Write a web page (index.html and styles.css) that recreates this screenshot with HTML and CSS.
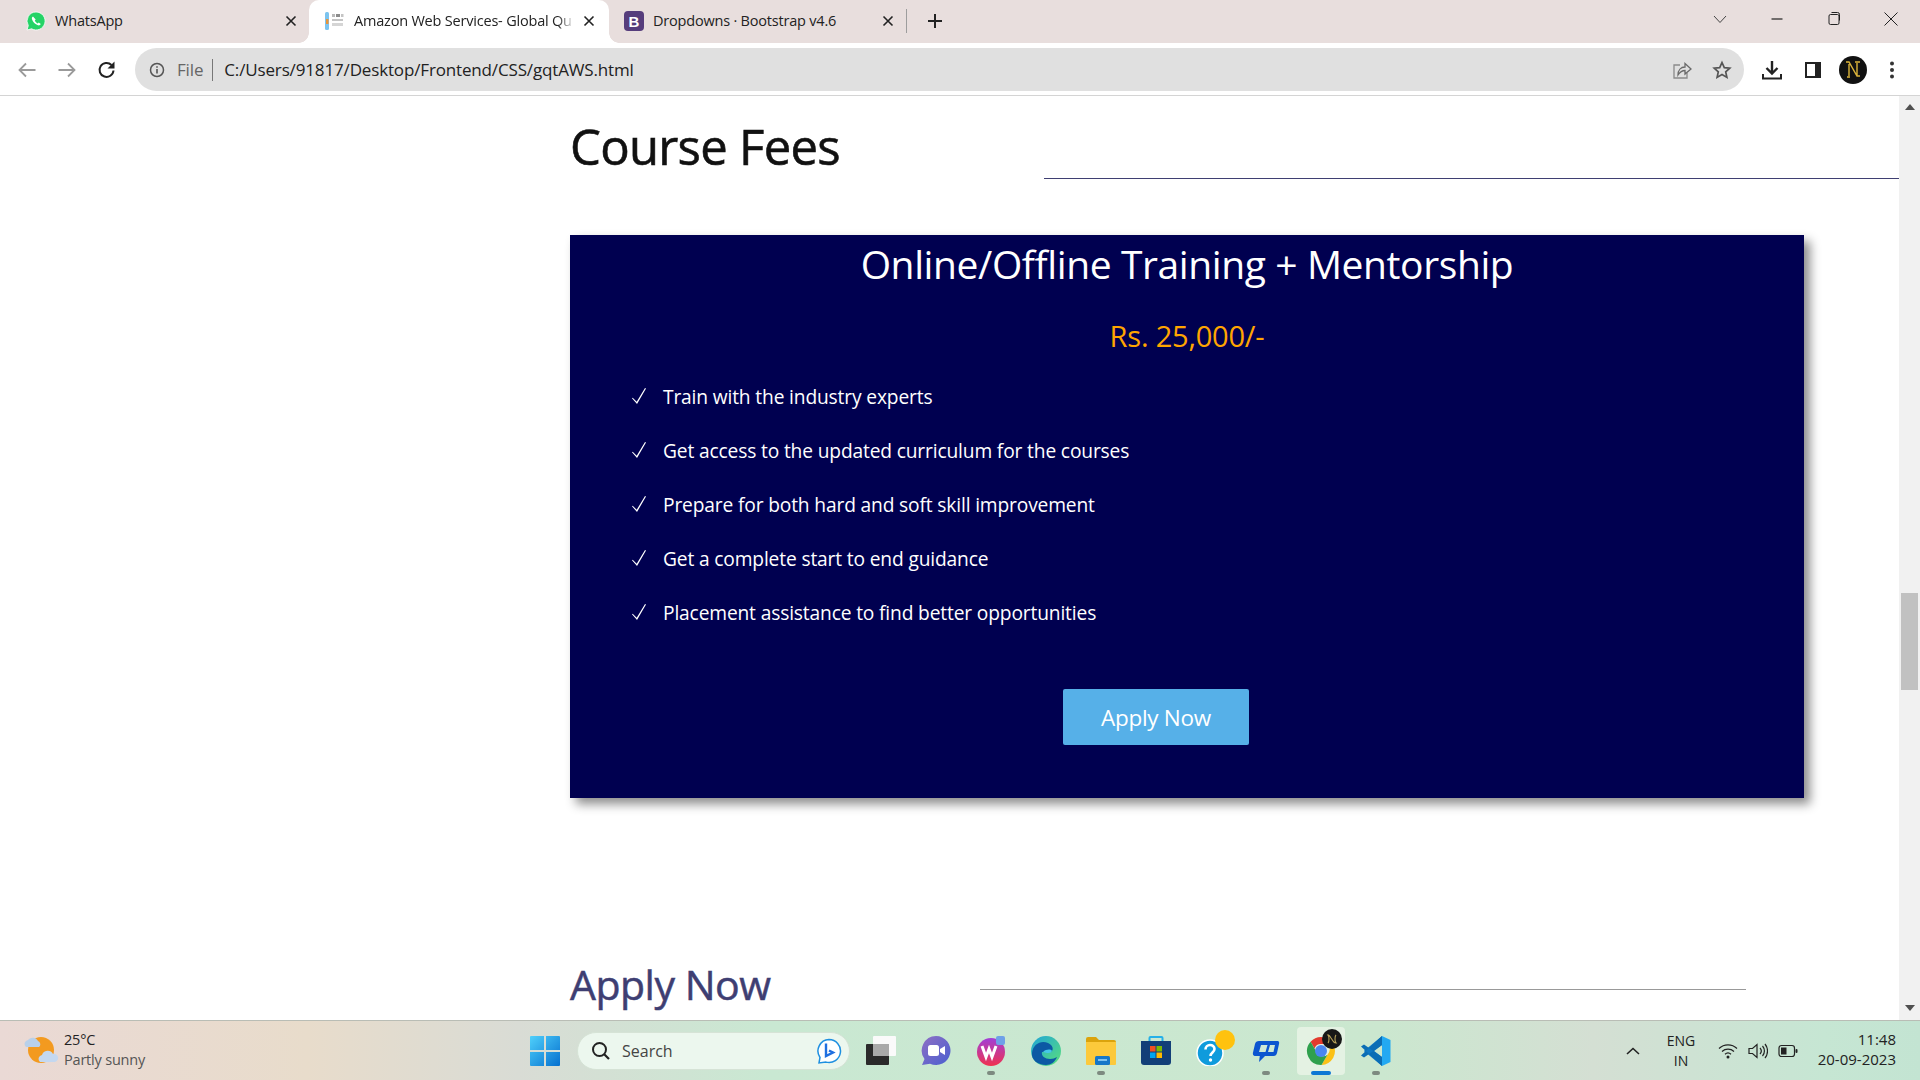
FILE: index.html
```html
<!DOCTYPE html>
<html lang="en">
<head>
<meta charset="utf-8">
<title>Amazon Web Services- Global Quest</title>
<link rel="stylesheet" href="styles.css">
</head>
<body>
<div class="screen">

  <header class="tabstrip">
    <div class="tab tab-first">
      <svg class="favicon" viewBox="0 0 20 20"><path d="M10 1a9 9 0 0 0-7.700 13.600L1 19l4.600-1.200A9 9 0 1 0 10 1z" fill="#25d366" stroke="#fff" stroke-width=".8"/><path d="M7 5.500c-.9.500-1.400 1.500-1 2.800.8 2.600 3.200 5.200 6 6 1.300.3 2.300-.2 2.800-1.200l-2.100-1.500-1 .9c-1.200-.5-2.300-1.600-2.900-3l.9-1z" fill="#fff"/></svg>
      <span class="tab-label">WhatsApp</span>
      <svg class="tab-close" viewBox="0 0 12 12"><path d="M1.500 1.500l9 9M10.500 1.500l-9 9" stroke="#222" stroke-width="1.600"/></svg>
    </div>
    <div class="tab tab-active">
      <svg class="favicon" viewBox="0 0 20 20"><rect x="1" y="1" width="4" height="18" rx="1.500" fill="#7cc3ee"/><rect x="2" y="8" width="2.500" height="5" fill="#e8943a"/><rect x="8" y="3" width="3" height="3" fill="#b9b9b9"/><rect x="12" y="3" width="4" height="3" fill="#8c8c8c"/><rect x="17" y="3" width="2.500" height="3" fill="#c4c4c4"/><rect x="8" y="8" width="11" height="2" fill="#c4c4c4"/><rect x="8" y="12" width="11" height="3" fill="#d5d5d5"/></svg>
      <span class="tab-label tab-fade">Amazon Web Services- Global Qu</span>
      <svg class="tab-close" viewBox="0 0 12 12"><path d="M1.500 1.500l9 9M10.500 1.500l-9 9" stroke="#222" stroke-width="1.600"/></svg>
    </div>
    <div class="tab tab-third">
      <svg class="favicon" viewBox="0 0 20 20"><rect width="20" height="20" rx="4" fill="#563d7c"/><text x="10" y="15.500" class="favicon-b">B</text></svg>
      <span class="tab-label">Dropdowns · Bootstrap v4.6</span>
      <svg class="tab-close" viewBox="0 0 12 12"><path d="M1.500 1.500l9 9M10.500 1.500l-9 9" stroke="#222" stroke-width="1.600"/></svg>
    </div>
    <span class="tab-sep"></span>
    <svg class="tab-plus" viewBox="0 0 16 16"><path d="M8 1v14M1 8h14" stroke="#222" stroke-width="2"/></svg>
    <div class="window-controls">
      <svg class="win-btn" viewBox="0 0 16 16"><path d="M2 5l6 6.500L14 5" fill="none" stroke="#444"/></svg>
      <svg class="win-btn" viewBox="0 0 16 16"><path d="M2.500 8h11" stroke="#222" stroke-width="1.200"/></svg>
      <svg class="win-btn" viewBox="0 0 16 16"><rect x="3" y="3.500" width="10" height="10" rx="1.500" fill="none" stroke="#222"/><path d="M5.500 1.500h6a2 2 0 0 1 2 2v6" fill="none" stroke="#222"/></svg>
      <svg class="win-btn" viewBox="0 0 16 16"><path d="M1.500 1.500l13 13M14.500 1.500l-13 13" stroke="#222"/></svg>
    </div>
  </header>

  <nav class="toolbar">
    <svg class="nav-icon" viewBox="0 0 20 20"><path d="M18.500 10H2.500M9 3.500L2.500 10 9 16.500" fill="none" stroke="#9a9a9a" stroke-width="1.800"/></svg>
    <svg class="nav-icon" viewBox="0 0 20 20"><path d="M1.500 10h16M11 3.500l6.500 6.500-6.500 6.500" fill="none" stroke="#9a9a9a" stroke-width="1.800"/></svg>
    <svg class="nav-icon" viewBox="0 0 20 20"><path d="M16.500 10.500a7 7 0 1 1-2-5.500" fill="none" stroke="#222" stroke-width="2"/><path d="M17.500 1.500v7h-7z" fill="#222"/></svg>
    <div class="omnibox">
      <svg class="info-icon" viewBox="0 0 16 16"><circle cx="8" cy="8" r="6.500" fill="none" stroke="#555" stroke-width="1.500"/><path d="M8 7v4.500M8 4.200v1.500" stroke="#555" stroke-width="1.600"/></svg>
      <span class="scheme">File</span>
      <span class="url">C:/Users/91817/Desktop/Frontend/CSS/gqtAWS.html</span>
      <svg class="omni-action" viewBox="0 0 20 20"><path d="M8 5H2v13h13v-5" fill="none" stroke="#8a8a8a" stroke-width="1.300"/><path d="M6 15c0-5 3-8 7-8V3.500l6 5.500-6 5v-3.500c-3 0-5 1.500-7 4.500z" fill="none" stroke="#6a6a6a" stroke-width="1.300"/></svg>
      <svg class="omni-action" viewBox="0 0 20 20"><path d="M10 2.500l2.300 5.100 5.500.6-4.100 3.700 1.200 5.500-4.900-2.800-4.900 2.800 1.200-5.500-4.100-3.700 5.500-.6z" fill="none" stroke="#555" stroke-width="1.700"/></svg>
    </div>
    <svg class="tool-icon" viewBox="0 0 20 20"><path d="M10 1v12M4.500 8l5.500 5.500L15.500 8" fill="none" stroke="#222" stroke-width="2.400"/><path d="M1 14v4.500h18V14" fill="none" stroke="#222" stroke-width="2"/></svg>
    <svg class="tool-icon" viewBox="0 0 20 20"><rect x="2" y="2" width="16" height="16" fill="#222"/><rect x="4" y="4" width="8" height="12" fill="#fff"/></svg>
    <svg class="avatar" viewBox="0 0 28 28"><circle cx="14" cy="14" r="14" fill="#111"/><path d="M7 6h3l8 14h3M10 6v0M18 20V7M8 21h3M10 8v12M16 6h5" fill="none" stroke="#dcb43a" stroke-width="1.400"/></svg>
    <svg class="kebab" viewBox="0 0 6 20"><circle cx="3" cy="3.500" r="2" fill="#333"/><circle cx="3" cy="10" r="2" fill="#333"/><circle cx="3" cy="16.500" r="2" fill="#333"/></svg>
  </nav>

  <div class="viewport">
    <main class="page">
      <section class="fees">
        <div class="section-head">
          <h1 class="fees-title">Course Fees</h1>
          <span class="fees-rule"></span>
        </div>
        <article class="plan">
          <h2 class="plan-title">Online/Offline Training + Mentorship</h2>
          <p class="plan-price">Rs. 25,000/-</p>
          <ul class="plan-list">
            <li class="plan-item"><svg class="tick" viewBox="0 0 14 16"><path d="M0 10.300l.7-.6 4 4.100L13 0l1 .5L5 16z" fill="#fff"/></svg>Train with the industry experts</li>
            <li class="plan-item"><svg class="tick" viewBox="0 0 14 16"><path d="M0 10.300l.7-.6 4 4.100L13 0l1 .5L5 16z" fill="#fff"/></svg>Get access to the updated curriculum for the courses</li>
            <li class="plan-item"><svg class="tick" viewBox="0 0 14 16"><path d="M0 10.300l.7-.6 4 4.100L13 0l1 .5L5 16z" fill="#fff"/></svg>Prepare for both hard and soft skill improvement</li>
            <li class="plan-item"><svg class="tick" viewBox="0 0 14 16"><path d="M0 10.300l.7-.6 4 4.100L13 0l1 .5L5 16z" fill="#fff"/></svg>Get a complete start to end guidance</li>
            <li class="plan-item"><svg class="tick" viewBox="0 0 14 16"><path d="M0 10.300l.7-.6 4 4.100L13 0l1 .5L5 16z" fill="#fff"/></svg>Placement assistance to find better opportunities</li>
          </ul>
          <div class="plan-cta"><a class="apply-btn">Apply Now</a></div>
        </article>
      </section>
      <section class="apply">
        <h2 class="apply-title">Apply Now</h2>
        <span class="apply-rule"></span>
      </section>
    </main>
    <aside class="scrollbar">
      <span class="arrow-up"></span>
      <span class="thumb"></span>
      <span class="arrow-down"></span>
    </aside>
  </div>

  <footer class="taskbar">
    <div class="weather">
      <svg class="weather-icon" viewBox="0 0 36 32"><circle cx="18" cy="16" r="13" fill="#f39a1f"/><path d="M18 3a13 13 0 0 1 0 26 10 10 0 0 0 0-26z" fill="#e8701a"/><path d="M3 13a4 4 0 0 1 2-7 6 6 0 0 1 10 1 3.500 3.500 0 0 1 1 6z" fill="#b8d0ea"/><path d="M17 28a4 4 0 0 1 2-7 6 6 0 0 1 11-1 4 4 0 0 1 2 8z" fill="#c4d8f0"/></svg>
      <div class="weather-text">
        <span class="weather-temp">25°C</span>
        <span class="weather-desc">Partly sunny</span>
      </div>
    </div>
    <div class="task-center">
      <div class="task-slot">
        <svg class="task-icon" viewBox="0 0 30 30"><defs><linearGradient id="winG" x1="0" y1="0" x2="1" y2="1"><stop offset="0" stop-color="#4fd0fb"/><stop offset="1" stop-color="#0570cf"/></linearGradient></defs><path d="M0 1a1 1 0 0 1 1-1h13v14H0zM16 0h13a1 1 0 0 1 1 1v13H16zM0 16h14v14H1a1 1 0 0 1-1-1zM16 16h14v13a1 1 0 0 1-1 1H16z" fill="url(#winG)"/></svg>
      </div>
      <div class="searchbox">
        <svg class="search-glass" viewBox="0 0 20 20"><circle cx="8.500" cy="8.500" r="6.500" fill="none" stroke="#222" stroke-width="2"/><path d="M13 13l5 5" stroke="#222" stroke-width="2.200"/></svg>
        <span class="search-text">Search</span>
        <svg class="bing" viewBox="0 0 26 26"><path d="M13 1.500a11.500 11.500 0 1 1-3 22.600L3 25l1-5.500A11.500 11.500 0 0 1 13 1.500z" fill="#fff" stroke="#1d8fe0" stroke-width="1.500"/><path d="M10 5.500v12.500l7-3.500-4-2" fill="none" stroke="#1f6fe0" stroke-width="2.400"/></svg>
      </div>
      <div class="task-slot">
        <svg class="task-icon" viewBox="0 0 30 30"><rect x="7" y="0" width="23" height="20" rx="1" fill="#fafafa"/><rect x="0" y="8" width="23" height="21" rx="1" fill="#2a2a2a"/><rect x="7" y="8" width="16" height="12" fill="#a9a9a9"/></svg>
      </div>
      <div class="task-slot">
        <svg class="task-icon" viewBox="0 0 30 30"><defs><linearGradient id="chatG" x1="0" y1="0" x2="1" y2="1"><stop offset="0" stop-color="#8f6fc4"/><stop offset="1" stop-color="#4a5fd0"/></linearGradient></defs><path d="M15 0a14.500 14.500 0 1 1-6 27.700L1 29l2.500-6A14.500 14.500 0 0 1 15 0z" fill="url(#chatG)"/><rect x="7" y="9" width="11" height="11" rx="2.500" fill="#fff"/><path d="M19 13l5-3v9l-5-3z" fill="#fff"/></svg>
      </div>
      <div class="task-slot">
        <svg class="task-icon" viewBox="0 0 30 30"><defs><linearGradient id="wpsG" x1="0" y1="0" x2="0" y2="1"><stop offset="0" stop-color="#a13fd8"/><stop offset="1" stop-color="#f0324f"/></linearGradient></defs><circle cx="15" cy="16" r="14" fill="url(#wpsG)"/><path d="M6 10l4 11 3-8 3 8 4-11" fill="none" stroke="#fff" stroke-width="3"/><rect x="20" y="0" width="9" height="9" rx="2" fill="#6ea0e8"/></svg>
        <span class="run-dot"></span>
      </div>
      <div class="task-slot">
        <svg class="task-icon" viewBox="0 0 30 30"><defs><linearGradient id="edgeG" x1="0" y1="0" x2="1" y2="1"><stop offset="0" stop-color="#1fa4d8"/><stop offset="1" stop-color="#5be07a"/></linearGradient></defs><circle cx="15" cy="15" r="15" fill="url(#edgeG)"/><path d="M1 17C2 8 10 4 17 7c5 2 6 7 3 9h-9c-1 4 3 7 8 7 3 0 5-1 7-2-2 5-6 8-11 8C7 29 0 24 1 17z" fill="#0c59a4"/><path d="M12 16c3-3 8-3 9-1-1 2-3 2-5 2z" fill="#46c6e8"/></svg>
      </div>
      <div class="task-slot">
        <svg class="task-icon" viewBox="0 0 30 30"><path d="M0 3a2 2 0 0 1 2-2h8l3 3h15a2 2 0 0 1 2 2v4H0z" fill="#dba30c"/><path d="M0 6h30v22a1 1 0 0 1-1 1H1a1 1 0 0 1-1-1z" fill="#fcc93b"/><rect x="9" y="20" width="15" height="9" rx="1.500" fill="#1577c8"/><rect x="12" y="23" width="9" height="2" fill="#7dc1ef"/></svg>
        <span class="run-dot"></span>
      </div>
      <div class="task-slot">
        <svg class="task-icon" viewBox="0 0 30 30"><path d="M8.500 5V2a1 1 0 0 1 1-1h11a1 1 0 0 1 1 1v3" fill="none" stroke="#25b0e8" stroke-width="2"/><path d="M0 5h30v21a3 3 0 0 1-3 3H3a3 3 0 0 1-3-3z" fill="#123f78"/><rect x="9" y="10" width="5.500" height="5.500" fill="#f25022"/><rect x="15.500" y="10" width="5.500" height="5.500" fill="#7fba00"/><rect x="9" y="16.500" width="5.500" height="5.500" fill="#00a4ef"/><rect x="15.500" y="16.500" width="5.500" height="5.500" fill="#ffb900"/></svg>
      </div>
      <div class="task-slot">
        <svg class="task-icon" viewBox="0 0 30 30"><circle cx="14" cy="17" r="13" fill="#0f9bdc" stroke="#fff" stroke-width="1.500"/><path d="M9.500 13.500c0-6 9-6 9-.5 0 3.500-4 3.500-4 7" fill="none" stroke="#fff" stroke-width="2.600"/><circle cx="14.500" cy="24" r="1.700" fill="#fff"/></svg>
        <span class="notify-dot"></span>
      </div>
      <div class="task-slot">
        <svg class="task-icon" viewBox="0 0 30 30"><path d="M8 5h18c2 0 2.500 1 2 3l-2 9c-.5 2-1.500 3-3.500 3H14l-6 6 .8-6H5c-2.500 0-3.500-1-3-3.500L4 8c.4-2 2-3 4-3z" fill="#0c55d0"/><path d="M10 9h6.500l-2 7H8zM19 9h5l-1.500 7H17z" fill="#cfe8d6"/></svg>
        <span class="run-dot"></span>
      </div>
      <div class="task-slot task-slot-active">
        <svg class="task-icon" viewBox="0 0 30 30"><path d="M15 1a14 14 0 0 1 12.100 7H15a7 7 0 0 0-6.500 4.400L4.600 5.700A14 14 0 0 1 15 1z" fill="#e33b2e"/><path d="M27.100 8A14 14 0 0 1 15.500 29l6-10.300A7 7 0 0 0 21 8z" fill="#fbc116"/><path d="M15.500 29A14 14 0 0 1 4.600 5.700l6.100 10.600A7 7 0 0 0 21.500 18.700z" fill="#2fa04d"/><circle cx="15" cy="15" r="6" fill="#4a86f0"/></svg>
        <svg class="chrome-badge" viewBox="0 0 20 20"><circle cx="10" cy="10" r="10" fill="#171717"/><path d="M6 14c1-1 1-3 1-4s0-3-1-4c1 0 2 1 3 3l2 3c.5 1 1 2 3 2-1-1-1-3-1-4s0-3 1-4" fill="none" stroke="#b9a35a" stroke-width="1.100"/></svg>
        <span class="active-bar"></span>
      </div>
      <div class="task-slot">
        <svg class="task-icon" viewBox="0 0 30 30"><path d="M21 0l8.500 4v22L21 30z" fill="#23a9f2"/><path d="M21 0v9L8.500 18.500 3 15z" fill="#0f78c4"/><path d="M21 30v-9L8.500 11.500 3 15z" fill="#0f78c4"/><path d="M0 10.500l3-2L21 21v9zM0 19.500l3 2L21 9V0z" fill="#0b6db5"/></svg>
        <span class="run-dot"></span>
      </div>
    </div>
    <div class="tray">
      <svg class="tray-caret" viewBox="0 0 14 8"><path d="M1 7l6-5.500L13 7" fill="none" stroke="#222" stroke-width="1.600"/></svg>
      <div class="lang"><span>ENG</span><span>IN</span></div>
      <svg class="tray-wifi" viewBox="0 0 20 16"><path d="M1 5.500a13 13 0 0 1 18 0M4 8.500a9 9 0 0 1 12 0M7 11.300a4.500 4.500 0 0 1 6 0" fill="none" stroke="#222" stroke-width="1.200"/><circle cx="10" cy="14" r="1.500" fill="#222"/></svg>
      <svg class="tray-vol" viewBox="0 0 20 16"><path d="M1 5.500h3.500L9 1.500v13l-4.500-4H1z" fill="none" stroke="#222" stroke-width="1.200"/><path d="M12 5a4.500 4.500 0 0 1 0 6M14.500 3a7.500 7.500 0 0 1 0 10M17 1a11 11 0 0 1 0 14" fill="none" stroke="#222" stroke-width="1.200"/></svg>
      <svg class="tray-batt" viewBox="0 0 20 14"><rect x="1" y="1.500" width="15.500" height="11" rx="2.500" fill="none" stroke="#222" stroke-width="1.200"/><rect x="3" y="3.500" width="5.500" height="7" fill="#222"/><rect x="17.500" y="5" width="2" height="4" rx="1" fill="#222"/></svg>
      <div class="clock"><span>11:48</span><span>20-09-2023</span></div>
    </div>
  </footer>
</div>
</body>
</html>
```

FILE: styles.css
```css
* { box-sizing: border-box; }
html, body { margin: 0; padding: 0; }
body { font-family: "Open Sans", "Noto Sans", sans-serif; background: #fff; color: #111; }

.screen { width: 1920px; height: 1080px; display: flex; flex-direction: column; overflow: hidden; }

/* tab strip */
.tabstrip { height: 43px; flex: none; display: flex; align-items: center; background: #e8dedd; font-size: 14.500px; letter-spacing: -0.200px; color: #222; }
.tab { height: 43px; display: flex; align-items: center; flex: none; position: relative; padding-bottom: 2px; }
.tab-first { width: 309px; padding-left: 26px; padding-right: 12px; }
.tab-active { width: 300px; padding-left: 15px; padding-right: 14px; background: #fff; border-radius: 10px 10px 0 0; }
.tab-active::before, .tab-active::after { content: ""; position: absolute; bottom: 0; width: 10px; height: 10px; }
.tab-active::before { left: -10px; background: radial-gradient(circle at 0 0, transparent 9.500px, #fff 10px); }
.tab-active::after { right: -10px; background: radial-gradient(circle at 100% 0, transparent 9.500px, #fff 10px); }
.tab-third { width: 298px; padding-left: 15px; padding-right: 13px; }
.favicon { width: 20px; height: 20px; flex: none; margin-right: 9px; }
.tab-active .favicon { margin-right: 10px; }
.favicon-b { font-family: "Liberation Sans", sans-serif; font-weight: 700; font-size: 15px; fill: #fff; text-anchor: middle; letter-spacing: 0; }
.tab-label { flex: 1; white-space: nowrap; overflow: hidden; }
.tab-fade { -webkit-mask-image: linear-gradient(90deg, #000 92%, transparent 100%); mask-image: linear-gradient(90deg, #000 92%, transparent 100%); }
.tab-close { width: 12px; height: 12px; flex: none; margin-left: 8px; }
.tab-sep { width: 1px; height: 24px; background: #9d9d9d; flex: none; margin-left: -1px; margin-bottom: 2px; }
.tab-plus { width: 16px; height: 16px; flex: none; margin-left: 20px; margin-bottom: 2px; }
.window-controls { margin-left: auto; display: flex; align-items: center; gap: 41px; padding-right: 21px; padding-bottom: 5px; }
.win-btn { width: 16px; height: 16px; flex: none; display: block; }

/* toolbar */
.toolbar { height: 53px; flex: none; display: flex; align-items: center; padding: 1px 0 0 17px; background: #fff; border-bottom: 1px solid #d4d4d4; }
.nav-icon { width: 20px; height: 20px; flex: none; margin-right: 20px; }
.nav-icon:nth-of-type(3) { margin-right: 18px; }
.omnibox { width: 1609px; height: 43px; border-radius: 22px; background: #e0e0e0; display: flex; align-items: center; padding: 0 12px 0 14px; flex: none; font-size: 17px; letter-spacing: -0.150px; }
.info-icon { width: 16px; height: 16px; flex: none; margin-right: 12px; }
.scheme { color: #666; padding-right: 9px; border-right: 1px solid #777; line-height: 22px; margin-right: 11px; }
.url { flex: 1; color: #222; white-space: nowrap; }
.omni-action { width: 20px; height: 20px; flex: none; margin-left: 20px; }
.tool-icon { width: 20px; height: 20px; flex: none; }
.toolbar > .tool-icon { margin-left: 18px; margin-right: 3px; }
.avatar { width: 28px; height: 28px; flex: none; margin-left: 13px; }
.kebab { width: 6px; height: 20px; flex: none; margin-left: 22px; }

/* page */
.viewport { flex: 1; min-height: 0; display: flex; }
.page { flex: 1; min-width: 0; overflow: hidden; padding-left: 570px; background: #fff; }
.section-head { display: flex; align-items: flex-start; }
.fees-title { margin: 18px 0 0; font-size: 49px; line-height: 64px; font-weight: 400; -webkit-text-stroke: 0.600px #111; letter-spacing: -0.700px; color: #111; width: 474px; flex: none; }
.fees-rule { flex: 1; background: #3f3f72; margin-top: 82px; height: 1px; }
.plan { width: 1234px; height: 563px; margin-top: 56px; background: #000050; color: #fff; box-shadow: 6px 6px 10px #8c8c8c; padding-top: 1px; }
.plan-title { margin: 0; text-align: center; font-weight: 400; font-size: 39px; line-height: 56px; letter-spacing: -0.400px; }
.plan-price { margin: 22px 0 0; text-align: center; color: #ffa500; font-size: 29px; line-height: 44px; letter-spacing: -0.200px; }
.plan-list { list-style: none; margin: 11px 0 0; padding: 0 0 0 62px; }
.plan-item { height: 54px; display: flex; align-items: center; font-size: 19.200px; letter-spacing: -0.150px; }
.tick { width: 14px; height: 16px; flex: none; margin-right: 17px; }
.plan-cta { padding-left: 493px; margin-top: 50px; }
.apply-btn { display: flex; align-items: center; justify-content: center; width: 186px; height: 56px; border-radius: 2px; background: #56b0e8; color: #fff; font-size: 22.500px; letter-spacing: -0.300px; }
.apply { display: flex; align-items: flex-start; margin-top: 160px; }
.apply-title { margin: 0; font-size: 41px; line-height: 52px; font-weight: 400; -webkit-text-stroke: 0.500px #3e3e72; color: #3e3e72; letter-spacing: -0.500px; width: 410px; flex: none; }
.apply-rule { width: 766px; height: 1px; background: #999; margin-top: 31px; }

/* scrollbar */
.scrollbar { width: 21px; flex: none; background: #f1f1f1; display: flex; flex-direction: column; align-items: center; padding-top: 8px; }
.arrow-up, .arrow-down { width: 0; height: 0; border-left: 5px solid transparent; border-right: 5px solid transparent; flex: none; }
.arrow-up { border-bottom: 6px solid #505050; }
.arrow-down { border-top: 6px solid #505050; margin-top: 315px; }
.thumb { width: 17px; height: 97px; background: #c1c1c1; margin-top: 483px; flex: none; }

/* taskbar */
.taskbar { height: 60px; flex: none; position: relative; display: flex; align-items: center; border-top: 1px solid #b9bdb5; background: linear-gradient(90deg, #ead9d5 0%, #e8dccb 16%, #d9dcd5 27%, #c9e8d2 40%, #cbe7cf 72%, #d4dfd3 83%, #c6e6d3 95%, #c3e4d2 100%); font-size: 14px; color: #222; }
.weather { width: 517px; flex: none; display: flex; align-items: center; padding-left: 23px; }
.weather-icon { width: 36px; height: 32px; flex: none; margin-right: 5px; margin-top: -2px; }
.weather-text { display: flex; flex-direction: column; line-height: 19.500px; font-size: 14.500px; letter-spacing: -0.200px; margin-top: -2px; }
.weather-desc { color: #555; }
.task-center { display: flex; align-items: center; flex: none; width: 915px; }
.task-slot { width: 55px; height: 48px; flex: none; display: flex; align-items: center; justify-content: center; position: relative; }
.task-slot:first-child { margin-right: 5px; }
.task-slot-active { background: #e4f2e3; border-radius: 4px; width: 48px; margin: 0 3px 0 4px; }
.task-icon { width: 30px; height: 30px; display: block; }
.searchbox { width: 273px; height: 38px; flex: none; border-radius: 19px; background: #ecf7ee; border: 1px solid #d6e3d6; margin-right: 3px; display: flex; align-items: center; padding: 0 7px 0 13px; }
.search-glass { width: 20px; height: 20px; flex: none; margin-right: 11px; }
.search-text { flex: 1; font-size: 16px; color: #444; }
.bing { width: 26px; height: 26px; flex: none; }
.run-dot { position: absolute; left: 50%; bottom: 0; width: 8px; height: 4px; margin-left: -4px; border-radius: 2px; background: #7d8a80; }
.active-bar { position: absolute; left: 14px; bottom: 0; width: 20px; height: 4px; border-radius: 2px; background: #0d78d4; }
.notify-dot { position: absolute; left: 32px; top: 3px; width: 20px; height: 20px; border-radius: 50%; background: #ffc20e; }
.chrome-badge { position: absolute; left: 25px; top: 2px; width: 20px; height: 20px; }
.tray { flex: 1; display: flex; align-items: center; }
.tray-caret { width: 14px; height: 8px; flex: none; margin-left: 194px; }
.lang { width: 56px; margin-left: 13px; flex: none; display: flex; flex-direction: column; align-items: center; line-height: 20px; font-size: 14px; }
.tray-wifi { width: 20px; height: 16px; flex: none; margin-left: 9px; }
.tray-vol { width: 20px; height: 16px; flex: none; margin-left: 10px; }
.tray-batt { width: 20px; height: 14px; flex: none; margin-left: 10px; }
.clock { margin-left: auto; padding-right: 24px; display: flex; flex-direction: column; align-items: flex-end; line-height: 19.500px; font-size: 15px; margin-top: -2px; }
```
